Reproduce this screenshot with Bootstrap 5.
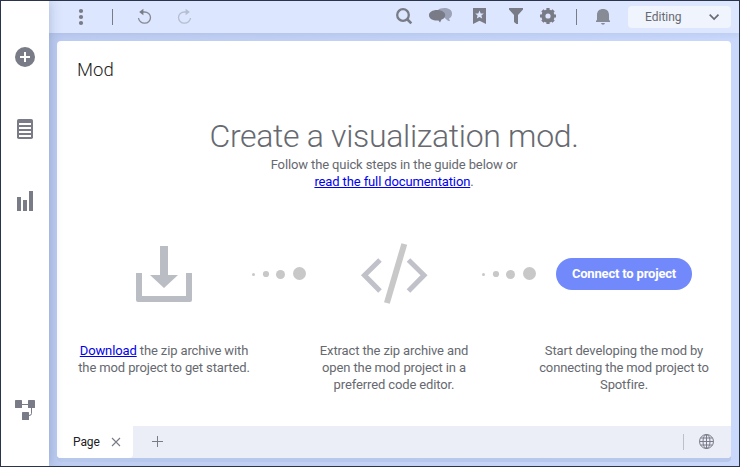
<!DOCTYPE html>
<html lang="en">
<head>
<meta charset="utf-8">
<meta name="viewport" content="width=device-width, initial-scale=1">
<title>Mod</title>
<link href="https://cdn.jsdelivr.net/npm/bootstrap@5.3.0/dist/css/bootstrap.min.css" rel="stylesheet">
<style>
body{font-family:Roboto,"Liberation Sans",sans-serif;font-size:13px;line-height:17px;letter-spacing:-.12px;color:#66696f}
svg{display:block;flex:none}
.window{width:740px;height:467px;border:1px solid #2b3348;background:linear-gradient(90deg,#bccbf0,#c9d8fb)}
.rail{width:48px;background:#fff;box-shadow:0 0 12px rgba(50,70,120,.3);padding:44px 0;z-index:2}
.rail svg,.tools svg{fill:#797b86}
.rail-gap{margin-top:48px}
.tools{height:32px;background:#dce6fe;box-shadow:0 0 8px rgba(50,70,120,.12);padding:0 8px 0 20px}
.rule{width:1px;height:16px;background:#797b86}
.rule-start{margin:0 19px}
.rule-end{margin:0 14px 0 16px}
.rule-soft{opacity:.4}
.icon-chat{margin-left:11px}
.icon-bookmark{margin-left:13px}
.icon-filter{margin-left:12px}
.icon-close{margin-left:10px}
.icon-add{margin-left:18px}
.icon-globe{margin-left:15px}
.mode{width:103px;height:22px;margin-left:13px;background:#f0f4fd!important;border-radius:4px;color:#66696f;padding:0 10px 0 17px;font-size:12px}
.sheet{margin:8px;height:417px;background:#fff;border-radius:4px;box-shadow:0 4px 0 #b8c8ec;overflow:hidden}
.sheet-title{font-size:18.500px;line-height:24px;font-weight:300;letter-spacing:0;color:#212121;padding:17px 0 0 20px}
.headline{font-size:32px;line-height:40px;font-weight:300;letter-spacing:-.32px;margin-top:34px}
.doc-link{color:#00e;text-decoration:underline}
.steps{margin-top:51px}
.step{width:172px}
.step-art{height:66px}
.trail{width:58px;height:66px}
.step p{margin:35px 0 0;white-space:nowrap}
.connect,.connect:hover{width:136px;height:32px;padding:0;border:0;border-radius:16px;background:#7289fb;color:#fff;font-size:13px;font-weight:700;letter-spacing:-.18px}
.tabs{height:32px;background:#ebeef7;padding-right:16px}
.page-tab{width:76px;background:#fff;color:#212121;font-size:12px;padding-left:16px;border-bottom-right-radius:4px}
</style>
</head>
<body class="overflow-hidden">
<div class="window d-flex">
  <nav class="rail d-flex flex-column align-items-center flex-shrink-0">
    <svg width="24" height="24" viewBox="13 45 24 24"><circle cx="25" cy="57" r="10"/><path d="M25 52v10M20 57h10" stroke="#fff" stroke-width="2"/></svg>
    <svg class="rail-gap" width="24" height="24" viewBox="13 117 24 24"><rect x="17" y="119" width="16" height="20" rx="1.8"/><path d="M19 124h12M19 128h12M19 132h12M19 136h12" stroke="#fff" stroke-width="2"/></svg>
    <svg class="rail-gap" width="24" height="24" viewBox="13 189 24 24"><path d="M17 197h4v14h-4zM23 200h4v11h-4zM29 191h4v20h-4z"/></svg>
    <svg class="mt-auto" width="24" height="24" viewBox="13 398 24 24"><rect x="15" y="400" width="7" height="8" rx=".6"/><rect x="28" y="400" width="7" height="8" rx=".6"/><rect x="22" y="412" width="7" height="8" rx=".6"/><path d="M22 404.500h6M31.500 408v5.500q0 2-2.500 2" fill="none" stroke="#797b86"/></svg>
  </nav>
  <div class="flex-grow-1">
    <header class="tools d-flex align-items-center">
      <svg width="24" height="24" viewBox="69 5 24 24"><circle cx="81" cy="11" r="2.100"/><circle cx="81" cy="17" r="2.100"/><circle cx="81" cy="23" r="2.100"/></svg>
      <span class="rule rule-start"></span>
      <svg width="24" height="24" viewBox="132 5 24 24"><path d="M138.500 18a6 5.600 0 1 0 6-6h-3" fill="none" stroke="#868994" stroke-width="1.300"/><path d="M139.200 12l4.200-3.200v6.400z"/></svg>
      <svg class="ms-3" opacity=".38" width="24" height="24" viewBox="172 5 24 24"><path d="M190.500 18a6 5.600 0 1 1-6-6h3" fill="none" stroke="#797b86" stroke-width="1.300"/><path d="M189.800 12l-4.200-3.200v6.400z"/></svg>
      <svg class="ms-auto" width="24" height="24" viewBox="392 5 24 24"><circle cx="403" cy="15" r="5.800" fill="none" stroke="#797b86" stroke-width="2.300"/><path d="M407 19l4.300 4.300" stroke="#797b86" stroke-width="2.600"/></svg>
      <svg class="icon-chat" width="28" height="24" viewBox="427 5 28 24"><path d="M438 10c3-3 14-3 14 3.500 0 2.500-1 4-3 5l1 2.500c-2 0-3-1-4-1.800z" fill="#9ca3b8"/><path d="M437 10c4.500 0 8.200 2.200 8.200 5.200 0 2.300-1.500 3.700-3.700 4.400L440 22.500l-1.500-2.100c-5 .4-9.500-1.500-9.500-5.200 0-3 3.500-5.200 8-5.200z"/></svg>
      <svg class="icon-bookmark" width="24" height="24" viewBox="468 5 24 24"><path d="M473 8h13v16l-6.500-3.200L473 24z"/><path d="M479.500 10.500l1.200 2.900 3.100.2-2.400 2 .8 3-2.700-1.600-2.700 1.600.8-3-2.400-2 3.100-.2z" fill="#dce6fe"/></svg>
      <svg class="icon-filter" width="24" height="24" viewBox="504 5 24 24"><path d="M509 8h14v1.500l-5 5.500v9h-1.500l-2.500-2v-7l-5-5.500z"/></svg>
      <svg class="ms-2" width="24" height="24" viewBox="536 5 24 24"><circle cx="548" cy="16" r="4.600" fill="none" stroke="#797b86" stroke-width="4"/><path d="M548 8v3.500M548 20.500V24M540 16h3.500M552.500 16h3.500M542.400 10.400l2.500 2.500M551.100 19.100l2.500 2.500M542.400 21.600l2.500-2.500M551.100 12.900l2.500-2.500" stroke="#797b86" stroke-width="3.200"/></svg>
      <span class="rule rule-end"></span>
      <svg width="24" height="24" viewBox="591 5 24 24"><path fill="#868b96" d="M596 22v-1l1-1.200V15c0-4 2.500-6 6-6s6 2 6 6v4.800l1 1.200v1zM601 23h4q-.4 1.800-2 1.800t-2-1.800z"/></svg>
      <button class="mode btn border-0 d-flex align-items-center justify-content-between">Editing<svg width="14" height="14" viewBox="707 10 14 14"><path d="M709.700 14.700l4.400 4.300 4.400-4.300" fill="none" stroke="#686b75" stroke-width="1.700"/></svg></button>
    </header>
    <main class="sheet d-flex flex-column">
      <div class="sheet-title">Mod</div>
      <h1 class="headline text-center mb-0">Create a visualization mod.</h1>
      <div class="text-center">Follow the quick steps in the guide below or<br><a class="doc-link" href="#">read the full documentation</a>.</div>
      <section class="steps d-flex justify-content-center text-center">
        <div class="step">
          <div class="step-art d-flex align-items-center justify-content-center">
            <svg width="64" height="66" viewBox="132 241 64 66" fill="#bbbdc4"><path d="M160 246h8v29h10l-14 13-14-13h10zM136 273h6v23h44v-23h6v27q0 2-2 2h-52q-2 0-2-2z"/></svg>
          </div>
          <p><a class="doc-link" href="#">Download</a> the zip archive with<br>the mod project to get started.</p>
        </div>
        <div class="trail"><svg width="58" height="66" viewBox="250 241 58 66" fill="#c8c8c8"><circle cx="253.500" cy="274.500" r="1.500"/><circle cx="266" cy="274" r="3.100"/><circle cx="280.500" cy="274.500" r="4.500"/><circle cx="299.500" cy="273.500" r="6.500"/></svg></div>
        <div class="step">
          <div class="step-art d-flex align-items-center justify-content-center">
            <svg width="72" height="66" viewBox="358 241 72 66" fill="none"><path d="M380 260l-15.500 15.300L380 291M408.500 260l15.500 15.300L408.500 291" stroke="#c0c1c9" stroke-width="5"/><path d="M404.300 244l-17.400 59" stroke="#c8c8c8" stroke-width="6"/></svg>
          </div>
          <p>Extract the zip archive and<br>open the mod project in a<br>preferred code editor.</p>
        </div>
        <div class="trail"><svg width="58" height="66" viewBox="250 241 58 66" fill="#c8c8c8"><circle cx="253.500" cy="274.500" r="1.500"/><circle cx="266" cy="274" r="3.100"/><circle cx="280.500" cy="274.500" r="4.500"/><circle cx="299.500" cy="273.500" r="6.500"/></svg></div>
        <div class="step">
          <div class="step-art d-flex align-items-center justify-content-center"><button class="btn connect">Connect to project</button></div>
          <p>Start developing the mod by<br>connecting the mod project to<br>Spotfire.</p>
        </div>
      </section>
      <footer class="tabs d-flex align-items-center mt-auto flex-shrink-0">
        <div class="page-tab d-flex align-items-center h-100">Page<svg class="icon-close" width="12" height="12" viewBox="110 436 12 12"><path d="M112 438l8 8M120 438l-8 8" stroke="#797b86" stroke-width="1.100"/></svg></div>
        <svg class="icon-add" width="12" height="12" viewBox="151 436 12 12"><path d="M157.500 436v11M152 441.500h11" stroke="#797b86"/></svg>
        <span class="rule rule-soft ms-auto"></span>
        <svg class="icon-globe" width="16" height="16" viewBox="699 434 16 16" fill="none" stroke="#797b86"><circle cx="706.500" cy="441.500" r="7"/><ellipse cx="706.500" cy="441.500" rx="3.500" ry="7"/><path d="M706.500 434.500v14M699.500 441.500h14M700.500 438h12M700.500 445h12"/></svg>
      </footer>
    </main>
  </div>
</div>
<script src="https://cdn.jsdelivr.net/npm/bootstrap@5.3.0/dist/js/bootstrap.bundle.min.js"></script>
</body>
</html>
